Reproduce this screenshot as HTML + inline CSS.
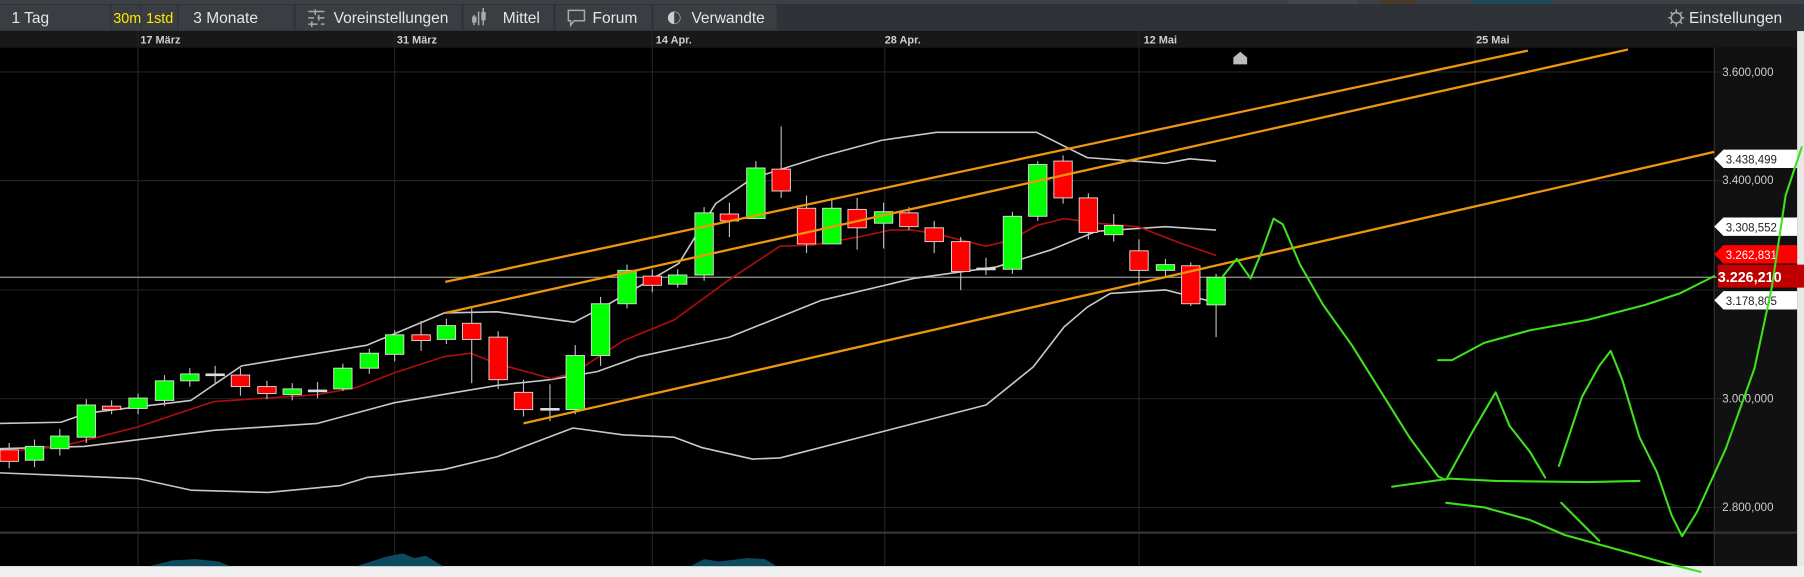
<!DOCTYPE html>
<html><head><meta charset="utf-8"><style>
html,body{margin:0;padding:0;background:#000;overflow:hidden}
svg{display:block}
text{font-family:"Liberation Sans",Arial,sans-serif}
</style></head><body>
<svg width="1804" height="577" viewBox="0 0 1568 501.5" preserveAspectRatio="none" xmlns="http://www.w3.org/2000/svg">
<rect x="0" y="0" width="1568" height="501.5" fill="#000"/>
<rect x="0" y="0" width="1568" height="3.5" fill="#3d4045"/>
<rect x="1120" y="0" width="60" height="3.5" fill="#44474c"/>
<rect x="1280" y="0" width="70" height="3.5" fill="#1f4a55"/>
<rect x="1200" y="0" width="30" height="3.5" fill="#4a3a28"/>
<rect x="0" y="3.5" width="1568" height="23.5" fill="#2f3236"/>
<g fill="#3a3d42">
<rect x="0" y="4" width="96" height="22.5"/>
<rect x="97" y="4" width="25" height="22.5"/>
<rect x="123" y="4" width="31" height="22.5"/>
<rect x="155" y="4" width="100" height="22.5"/>
<rect x="257" y="4" width="144" height="22.5"/>
<rect x="403" y="4" width="78" height="22.5"/>
<rect x="483" y="4" width="83" height="22.5"/>
<rect x="568" y="4" width="107" height="22.5"/>
</g>
<g fill="#e6e6e6" font-size="13.5">
<text x="10" y="20">1 Tag</text>
<text x="98.5" y="20" fill="#ffe800" font-size="12.5">30m</text>
<text x="127" y="20" fill="#ffe800" font-size="12.5">1std</text>
<text x="168" y="20">3 Monate</text>
<text x="290" y="20">Voreinstellungen</text>
<text x="437" y="20">Mittel</text>
<text x="515" y="20">Forum</text>
<text x="601" y="20">Verwandte</text>
<text x="1468" y="20">Einstellungen</text>
</g>
<g stroke="#aaa" stroke-width="1.3" fill="none">
<path d="M268 10h14M268 15.5h5M276 15.5h6M268 21h8M279 21h3"/>
<path d="M274 8v5M277 13v5M271 18.5v5"/>
<path d="M412 13v9M416 10v12M420 7v15"/>
<rect x="411" y="15" width="2.5" height="4" fill="#aaa"/>
<rect x="419" y="11" width="2.5" height="6" fill="#aaa"/>
<path d="M494 9h14v9h-9l-3 4v-4h-2z"/>
<circle cx="586" cy="15.5" r="5.5" fill="#ccc" stroke="none"/>
<circle cx="1457" cy="15.5" r="4.5"/>
<path d="M1457 8v2.5M1457 20.5v2.5M1450 15.5h2.5M1461.5 15.5h2.5M1452 10.5l1.8 1.8M1460.2 18.7l1.8 1.8M1462 10.5l-1.8 1.8M1453.8 18.7l-1.8 1.8"/>
</g>
<path d="M586 10.5a5 5 0 0 1 0 10z" fill="#3a3d42"/>
<rect x="0" y="27" width="1568" height="14.5" fill="#181818"/>
<g fill="#d0d0d0" font-size="9.5" font-weight="bold">
<text x="122" y="38">17 März</text>
<text x="345" y="38">31 März</text>
<text x="570" y="38">14 Apr.</text>
<text x="769" y="38">28 Apr.</text>
<text x="994" y="38">12 Mai</text>
<text x="1283" y="38">25 Mai</text>
</g>
<rect x="1490" y="41.5" width="72" height="451" fill="#111"/>
<rect x="1562" y="27" width="6" height="475" fill="#e8e8e8"/>
<rect x="0" y="492" width="1568" height="10" fill="#f0f0f0"/>
<line x1="1490" y1="41.5" x2="1490" y2="492" stroke="#333" stroke-width="1"/>
<g stroke="#222" stroke-width="1">
<line x1="120" y1="27" x2="120" y2="492"/>
<line x1="343" y1="27" x2="343" y2="492"/>
<line x1="567" y1="27" x2="567" y2="492"/>
<line x1="769" y1="41" x2="769" y2="492"/>
<line x1="990" y1="27" x2="990" y2="492"/>
<line x1="1282" y1="27" x2="1282" y2="492"/>
<line x1="0" y1="62.5" x2="1500" y2="62.5"/>
<line x1="0" y1="157" x2="1500" y2="157"/>
<line x1="0" y1="252" x2="1500" y2="252"/>
<line x1="0" y1="346.5" x2="1500" y2="346.5"/>
<line x1="0" y1="441" x2="1500" y2="441"/>
</g>
<line x1="0" y1="463" x2="1562" y2="463" stroke="#333" stroke-width="2"/>
<g fill="#0d4a60">
<path d="M130 492 L150 487 L170 486 L190 488 L200 492z"/>
<path d="M310 492 L335 484 L350 481 L360 485 L370 483 L385 492z"/>
<path d="M600 492 L612 486 L625 488 L650 485 L665 486 L675 492z"/>
</g>
<g fill="#cfcfcf" font-size="10">
<text x="1497" y="66">3.600,000</text>
<text x="1497" y="160">3.400,000</text>
<text x="1497" y="350">3.000,000</text>
<text x="1497" y="444">2.800,000</text>
</g>
<line x1="0" y1="241" x2="1492" y2="241" stroke="#888" stroke-width="1.2"/>
<g fill="none" stroke-width="1.4" stroke-linejoin="round">
<polyline stroke="#c8c8c8" points="0,368 53,367 76,359 166,348 210,318 319,300 386,272 432,271 499,280 526,266 590,229 622,177 654,155 714,136 766,122 814,115 901,115 945,137 1013,142 1034,138 1057,140"/>
<polyline stroke="#c8c8c8" points="0,390 73,388 186,374 276,368 343,350 432,335 478,330 519,323 555,310 634,293 714,261 794,242 866,232 914,217 953,201 1013,197 1057,200"/>
<polyline stroke="#c8c8c8" points="0,411 73,414 120,416 166,426 233,428 296,422 319,415 386,408 432,397 498,372 542,378 586,380 610,389 654,399 678,398 857,352 898,319 925,284 945,267 965,255 1013,252 1057,263"/>
<polyline stroke="#b00e0e" points="0,393 53,388 120,371 186,349 276,343 309,337 343,324 386,310 409,307 432,316 479,329 499,324 542,296 586,278 634,243 678,214 706,213 746,206 774,200 793,200 813,203 857,214 878,209 901,196 925,190 953,194 989,197 1025,211 1057,222"/>
</g>
<g stroke="#bbb" stroke-width="1">
<path d="M8 385v22M30 382v24M52 373v23M75 347v38M97 348v12M120 342v18M143 326v27M165 320v16M187 318v16M209 320v24M232 331v16M254 333v15M276 332v14M298 316v24M321 303v22M343 287v27M366 279v26M388 277v22M410 268v65M433 288v50M455 330v32M478 334v32M500 300v60M522 258v60M545 230v38M567 234v20M589 234v16M612 180v64M634 176v30M657 140v50M679 110v62M701 170v50M723 172v40M745 172v45M768 176v40M790 180v20M812 192v28M835 206v46M857 224v15M880 184v54M902 140v52M924 135v42M946 168v40M968 186v24M990 208v40M1013 225v15M1035 228v38M1057 238v55"/>
</g>
<g stroke="#ddd" stroke-width="0.8">
<rect x="0" y="391" width="16" height="10" fill="#f00"/>
<rect x="22" y="388" width="16" height="12" fill="#0f0"/>
<rect x="44" y="379" width="16" height="11" fill="#0f0"/>
<rect x="67" y="352" width="16" height="28" fill="#0f0"/>
<rect x="89" y="353" width="16" height="3" fill="#f00"/>
<rect x="112" y="346" width="16" height="9" fill="#0f0"/>
<rect x="135" y="331" width="16" height="17" fill="#0f0"/>
<rect x="157" y="325" width="16" height="6" fill="#0f0"/>
<rect x="179" y="325" width="16" height="1.5" fill="#ddd"/>
<rect x="201" y="326" width="16" height="10" fill="#f00"/>
<rect x="224" y="336" width="16" height="6" fill="#f00"/>
<rect x="246" y="338" width="16" height="5" fill="#0f0"/>
<rect x="268" y="339" width="16" height="1.5" fill="#ddd"/>
<rect x="290" y="320" width="16" height="18" fill="#0f0"/>
<rect x="313" y="307" width="16" height="13" fill="#0f0"/>
<rect x="335" y="291" width="16" height="17" fill="#0f0"/>
<rect x="358" y="291" width="16" height="5" fill="#f00"/>
<rect x="380" y="283" width="16" height="12" fill="#0f0"/>
<rect x="402" y="281" width="16" height="14" fill="#f00"/>
<rect x="425" y="293" width="16" height="37" fill="#f00"/>
<rect x="447" y="341" width="16" height="15" fill="#f00"/>
<rect x="470" y="355" width="16" height="1.5" fill="#ddd"/>
<rect x="492" y="309" width="16" height="47" fill="#0f0"/>
<rect x="514" y="264" width="16" height="45" fill="#0f0"/>
<rect x="537" y="235" width="16" height="29" fill="#0f0"/>
<rect x="559" y="240" width="16" height="8" fill="#f00"/>
<rect x="581" y="239" width="16" height="8" fill="#0f0"/>
<rect x="604" y="185" width="16" height="54" fill="#0f0"/>
<rect x="626" y="186" width="16" height="6" fill="#f00"/>
<rect x="649" y="146" width="16" height="44" fill="#0f0"/>
<rect x="671" y="147" width="16" height="19" fill="#f00"/>
<rect x="693" y="181" width="16" height="31" fill="#f00"/>
<rect x="715" y="181" width="16" height="31" fill="#0f0"/>
<rect x="737" y="182" width="16" height="16" fill="#f00"/>
<rect x="760" y="184" width="16" height="10" fill="#0f0"/>
<rect x="782" y="185" width="16" height="12" fill="#f00"/>
<rect x="804" y="198" width="16" height="12" fill="#f00"/>
<rect x="827" y="210" width="16" height="26" fill="#f00"/>
<rect x="849" y="233" width="16" height="1.5" fill="#ddd"/>
<rect x="872" y="188" width="16" height="46" fill="#0f0"/>
<rect x="894" y="143" width="16" height="45" fill="#0f0"/>
<rect x="916" y="140" width="16" height="32" fill="#f00"/>
<rect x="938" y="172" width="16" height="30" fill="#f00"/>
<rect x="960" y="196" width="16" height="8" fill="#0f0"/>
<rect x="982" y="218" width="16" height="17" fill="#f00"/>
<rect x="1005" y="230" width="16" height="5" fill="#0f0"/>
<rect x="1027" y="231" width="16" height="33" fill="#f00"/>
<rect x="1049" y="241" width="16" height="24" fill="#0f0"/>
</g>
<g stroke="#f0960e" stroke-width="2" fill="none">
<line x1="387" y1="245" x2="1328" y2="44"/>
<line x1="387" y1="272" x2="1415" y2="43"/>
<line x1="455" y1="368" x2="1490" y2="132"/>
</g>
<path d="M1072 56v-6l6-5 6 5v6z" fill="#bbb"/>
<g font-size="10">
<path d="M1490 138l8-8h64v16h-64z" fill="#fff"/>
<text x="1500" y="142" fill="#222">3.438,499</text>
<path d="M1490 197l8-8h64v16h-64z" fill="#fff"/>
<text x="1500" y="201" fill="#222">3.308,552</text>
<path d="M1490 221l8-8h64v16h-64z" fill="#f00"/>
<text x="1500" y="225" fill="#fff">3.262,831</text>
<rect x="1493" y="230" width="75" height="20" fill="#c00000"/>
<text x="1493" y="245" fill="#fff" font-size="12.5" font-weight="bold">3.226,210</text>
<path d="M1490 261l8-8h64v16h-64z" fill="#fff"/>
<text x="1500" y="265" fill="#222">3.178,805</text>
</g>
<g stroke="#3fe01e" stroke-width="1.8" fill="none" stroke-linecap="round" stroke-linejoin="round">
<polyline points="1063,240 1075,225 1087,242 1097,218 1107,190 1115,195 1130,230 1150,265 1175,300 1200,340 1225,380 1250,414 1256,417"/>
<polyline points="1258,415 1280,375 1300,341 1312,370 1330,393 1343,415"/>
<polyline points="1355,405 1375,345 1390,318 1400,305 1410,330 1425,380 1440,410 1453,448 1462,466 1475,445 1500,390 1525,320 1540,250 1552,170 1566,128"/>
<polyline points="1250,313 1262,313 1290,298 1330,287 1380,278 1430,265 1460,255 1490,240"/>
<polyline points="1210,423 1260,416 1300,418 1380,419 1425,418"/>
<polyline points="1257,437 1290,441 1330,452 1360,465 1400,476 1450,490 1478,497"/>
<polyline points="1357,437 1375,455 1390,470"/>
</g>
</svg>
</body></html>
